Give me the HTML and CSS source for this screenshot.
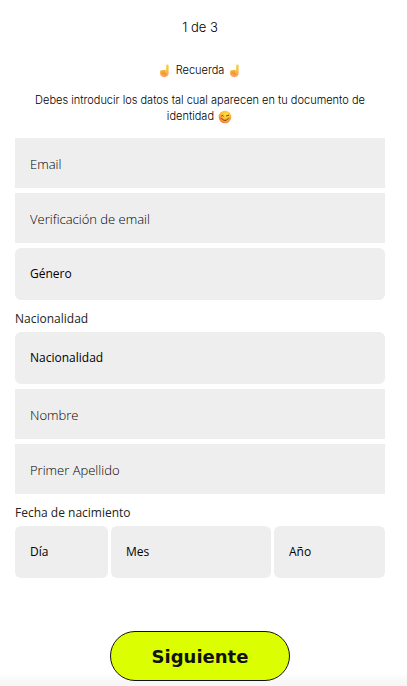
FILE: index.html
```
<!DOCTYPE html>
<html lang="es">
<head>
    <meta charset="UTF-8">
    <meta name="viewport" content="width=device-width, initial-scale=1.0">
    <title>Registro</title>
    <link rel="stylesheet" href="styles.css">
</head>
<body>
    <svg width="0" height="0" class="sprite" aria-hidden="true">
        <defs>
            <linearGradient id="skin" x1="0" y1="0" x2="0" y2="1">
                <stop offset="0" stop-color="#ffd02e"/>
                <stop offset="0.55" stop-color="#fcb83f"/>
                <stop offset="1" stop-color="#ff9a6c"/>
            </linearGradient>
            <radialGradient id="face" cx="0.6" cy="0.3" r="0.75">
                <stop offset="0" stop-color="#ffe03b"/>
                <stop offset="0.6" stop-color="#ffb53a"/>
                <stop offset="1" stop-color="#f0783c"/>
            </radialGradient>
            <symbol id="finger" viewBox="0 0 13 15">
                <path fill="url(#skin)" d="M7.8 7V1.8a1.3 1.3 0 0 1 2.6 0v7.9c0 2.7-1.8 4.4-4.6 4.4-2.8 0-4.6-1.5-4.6-3.8V8c0-1.3 1.6-1.7 2.1-.8.2-1.3 1.9-1.4 2.3-.4.4-.7 1.6-.7 2.2.2z"/>
                <path fill="none" stroke="#d98324" stroke-width="0.6" stroke-linecap="round" d="M3.4 7.6v2M5.6 7.2v2M3.1 10.1h3.7c1 0 1 1.2.1 1.3l-1.4.2"/>
            </symbol>
            <symbol id="wink" viewBox="0 0 14 14">
                <circle cx="7" cy="7" r="6.3" fill="url(#face)"/>
                <circle cx="2.9" cy="8.5" r="1.6" fill="#f4693c" opacity="0.5"/>
                <circle cx="11.1" cy="8.5" r="1.6" fill="#f4693c" opacity="0.4"/>
                <path fill="none" stroke="#5b2f1c" stroke-width="0.9" stroke-linecap="round" d="M3.3 6.1c.4-1 1.7-1 2.1 0M8.5 5.9l2.2-.6M3.9 8.7c1.4 2.3 4.8 2.3 6.2 0"/>
            </symbol>
        </defs>
    </svg>

    <main class="page">
        <h1 class="step">1 de 3</h1>
        <div class="notice">
            <p>
                <svg class="emoji" aria-hidden="true"><use href="#finger"/></svg>
                Recuerda
                <svg class="emoji" aria-hidden="true"><use href="#finger"/></svg>
            </p>
            <p>
                Debes introducir los datos tal cual aparecen en tu documento de identidad
                <svg class="emoji" aria-hidden="true"><use href="#wink"/></svg>
            </p>
        </div>

        <form class="form">
            <input type="email" class="field" placeholder="Email" aria-label="Email">
            <input type="email" class="field" placeholder="Verificación de email" aria-label="Verificación de email">
            <select class="select" aria-label="Género">
                <option>Género</option>
            </select>

            <label for="nationality">Nacionalidad</label>
            <select class="select" id="nationality">
                <option>Nacionalidad</option>
            </select>
            <input type="text" class="field" placeholder="Nombre" aria-label="Nombre">
            <input type="text" class="field" placeholder="Primer Apellido" aria-label="Primer Apellido">

            <label for="day">Fecha de nacimiento</label>
            <div class="date">
                <select class="select" id="day">
                    <option>Día</option>
                </select>
                <select class="select" aria-label="Mes">
                    <option>Mes</option>
                </select>
                <select class="select" aria-label="Año">
                    <option>Año</option>
                </select>
            </div>

            <button type="submit" class="next">Siguiente</button>
        </form>
    </main>
</body>
</html>
```

FILE: styles.css
```
* {
    box-sizing: border-box;
}
body {
    margin: 0;
    font-family: "Open Sans", sans-serif;
    font-size: 12px;
    color: #222;
    background: #fff;
}
.sprite {
    display: block;
}
.page {
    padding: 18px 22px 5px 15px;
    background: linear-gradient(to top, #f7f7f7 5px, #fff 12px);
}
.step {
    margin: 0 0 26px;
    font-family: Inter, sans-serif;
    font-size: 13px;
    font-weight: 300;
    line-height: 18px;
    text-align: center;
    color: #000;
}
.notice {
    padding: 0 16px;
    font-family: Inter, sans-serif;
    font-size: 11px;
    font-weight: 300;
    line-height: 16px;
    text-align: center;
    color: #000;
}
.notice p {
    margin: 0 0 14px;
}
.emoji {
    width: 14px;
    height: 14px;
    margin: 0 1px;
    vertical-align: middle;
}
.form {
    display: flex;
    flex-direction: column;
    gap: 5px;
}
.field {
    width: 100%;
    height: 50px;
    padding: 2px 15px 0;
    border: none;
    border-radius: 0;
    background: #eee;
    font-family: "Open Sans", sans-serif;
    font-size: 13px;
    font-weight: 300;
    color: #000;
}
.field::placeholder {
    color: #000;
    opacity: 1;
}
.select {
    width: 100%;
    height: 52px;
    padding: 0 15px 2px;
    border: none;
    border-radius: 6px;
    background: #eee;
    font-family: "Open Sans", sans-serif;
    font-size: 12px;
    color: #000;
    appearance: none;
}
label {
    padding-top: 6px;
    line-height: 16px;
}
.date {
    display: grid;
    grid-template-columns: 93fr 160fr 111fr;
    gap: 3px;
}
.next {
    align-self: center;
    width: 180px;
    height: 50px;
    margin-top: 48px;
    border: 1px solid #111;
    border-radius: 25px;
    background: #dbff00;
    font-family: "DejaVu Sans", sans-serif;
    font-size: 18px;
    font-weight: 700;
    color: #111;
    cursor: pointer;
}
```
